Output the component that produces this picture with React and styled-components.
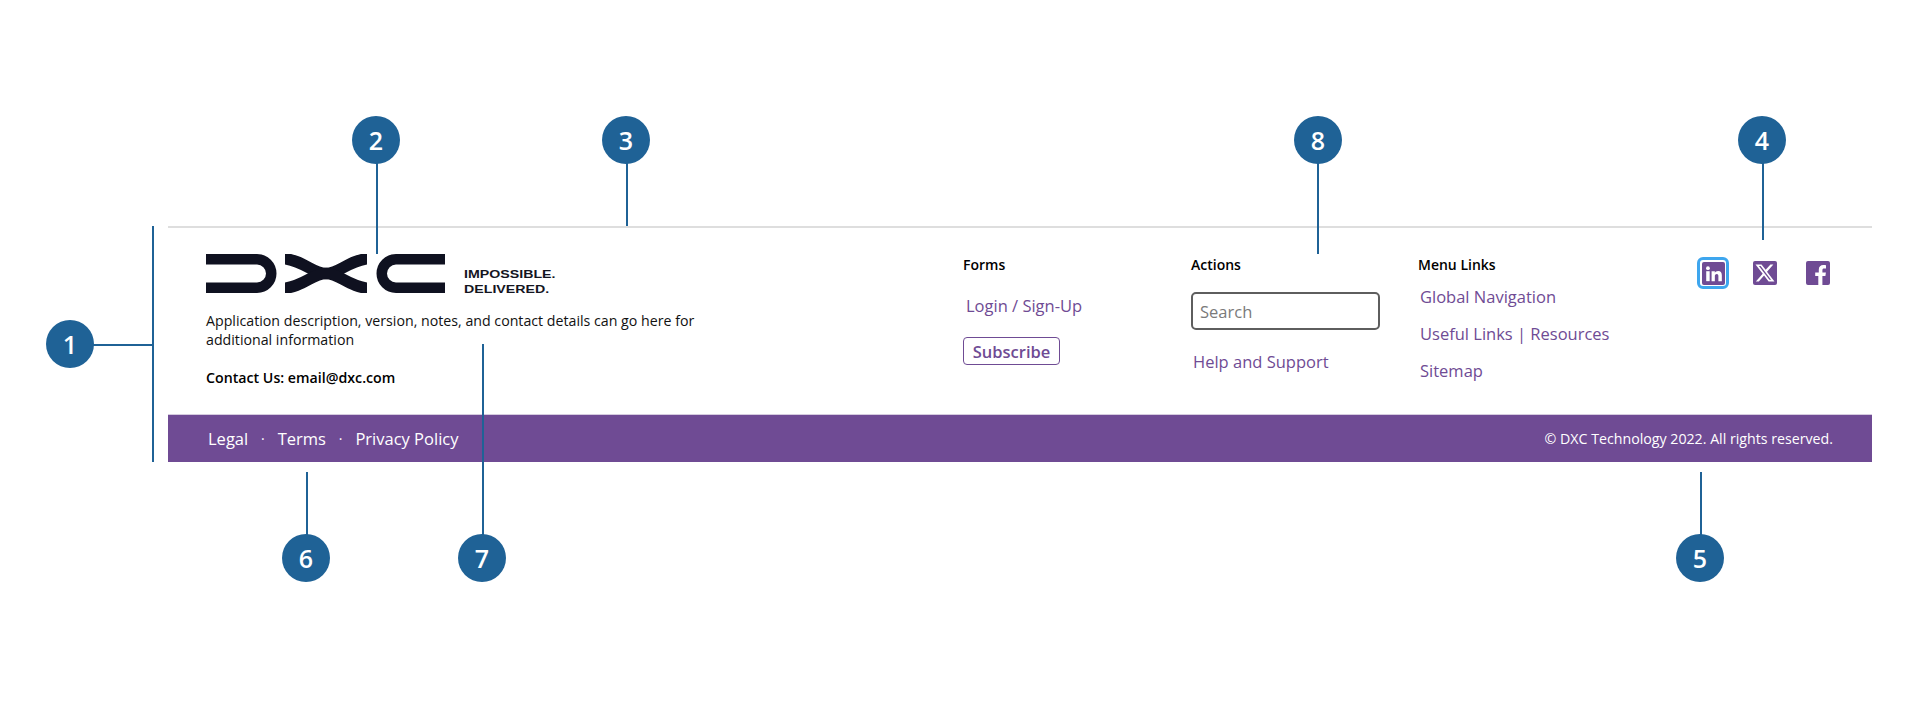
import React from 'react';
import styled, { createGlobalStyle } from 'styled-components';

const purple = '#6f4b94';
const blue = '#1f6296';

const GlobalStyle = createGlobalStyle`
    html, body {
        margin: 0;
        padding: 0;
        background: #ffffff;
        font-family: "Open Sans", "Liberation Sans", sans-serif;
    }
`;

const Page = styled.div`
    position: relative;
    box-sizing: border-box;
    width: 1920px;
    height: 720px;
    padding: 226px 48px 0 168px;
    overflow: hidden;
`;

const Footer = styled.footer`
    border-top: 2px solid #dedede;
`;

const Main = styled.div`
    display: grid;
    grid-template-columns: 757px 228px 227px 279px 1fr;
    box-sizing: border-box;
    height: 187px;
    padding-left: 38px;
`;

const Brand = styled.div`
    display: flex;
    flex-direction: column;
    padding-top: 26px;
`;

const LogoRow = styled.div`
    display: flex;
    align-items: flex-start;
`;

const Tagline = styled.div`
    margin: 13px 0 0 18px;
    font-family: "Liberation Sans", Arial, sans-serif;
    font-weight: 700;
    font-size: 11px;
    line-height: 15px;
    color: #14151f;
    transform: scaleX(1.29);
    transform-origin: left top;
`;

const Description = styled.p`
    width: 500px;
    margin: 14px 0 0;
    font-size: 14.2px;
    line-height: 19px;
    color: #111111;
`;

const Contact = styled.p`
    margin: 19px 0 0;
    font-size: 14.2px;
    line-height: 19px;
    font-weight: 600;
    color: #000000;
`;

const Column = styled.div`
    display: flex;
    flex-direction: column;
    align-items: flex-start;
    padding-top: 27px;
`;

const Heading = styled.h4`
    margin: 0;
    font-size: 14px;
    line-height: 19px;
    font-weight: 600;
    color: #000000;
`;

const NavLink = styled.a`
    margin-top: ${(props) => props.$top};
    padding-left: ${(props) => props.$left || '2px'};
    font-size: 16.5px;
    line-height: 24px;
    color: ${purple};
`;

const Subscribe = styled.button`
    box-sizing: border-box;
    width: 97px;
    height: 28px;
    margin-top: 19px;
    padding: 0;
    background: #ffffff;
    border: 1px solid ${purple};
    border-radius: 4px;
    font-family: inherit;
    font-size: 16.5px;
    font-weight: 600;
    color: ${purple};
`;

const Search = styled.input`
    box-sizing: border-box;
    width: 189px;
    height: 38px;
    margin-top: 18px;
    padding: 0 7px;
    background: #ffffff;
    border: 2px solid #5e5e5e;
    border-radius: 5px;
    font-family: inherit;
    font-size: 16.5px;

    &::placeholder {
        color: #7a7a7a;
        opacity: 1;
    }
`;

const Socials = styled.div`
    display: flex;
    align-items: center;
    height: 32px;
    margin-top: 29px;
`;

const SocialLink = styled.a`
    display: flex;
    align-items: center;
    justify-content: center;
    box-sizing: border-box;
    width: 32px;
    height: 32px;
    margin-right: ${(props) => props.$gap};
    border-radius: 6px;
    border: 3px solid ${(props) => (props.$focus ? '#3ea6ee' : 'transparent')};
`;

const Bar = styled.div`
    display: flex;
    align-items: center;
    justify-content: space-between;
    height: 47px;
    padding: 0 39px 0 40px;
    background: ${purple};
    box-shadow: 0 -1px 0 #d5cbdf;
    color: #ffffff;
`;

const Legal = styled.div`
    display: flex;
    align-items: center;
    font-size: 16.5px;
`;

const Dot = styled.span`
    width: 29.5px;
    text-align: center;
    font-size: 14px;
`;

const Copyright = styled.span`
    font-size: 14.2px;
`;

const Bubble = styled.div`
    position: absolute;
    left: ${(props) => props.$x - 24}px;
    top: ${(props) => props.$y - 24}px;
    display: flex;
    align-items: center;
    justify-content: center;
    width: 48px;
    height: 48px;
    border-radius: 50%;
    background: ${blue};
    color: #ffffff;
    font-size: 25px;
    font-weight: 550;
`;

const Leader = styled.div`
    position: absolute;
    left: ${(props) => props.$x}px;
    top: ${(props) => props.$y}px;
    width: ${(props) => props.$w}px;
    height: ${(props) => props.$h}px;
    background: ${blue};
`;

const bubbles = [
    { n: 1, x: 70, y: 344 },
    { n: 2, x: 376, y: 140 },
    { n: 3, x: 626, y: 140 },
    { n: 4, x: 1762, y: 140 },
    { n: 5, x: 1700, y: 558 },
    { n: 6, x: 306, y: 558 },
    { n: 7, x: 482, y: 558 },
    { n: 8, x: 1318, y: 140 },
];

const leaders = [
    { x: 152, y: 226, w: 2, h: 236 },
    { x: 90, y: 344, w: 62, h: 2 },
    { x: 376, y: 160, w: 2, h: 94 },
    { x: 626, y: 160, w: 2, h: 66 },
    { x: 1762, y: 160, w: 2, h: 80 },
    { x: 1317, y: 160, w: 2, h: 94 },
    { x: 1700, y: 472, w: 2, h: 66 },
    { x: 306, y: 472, w: 2, h: 66 },
    { x: 482, y: 344, w: 2, h: 194 },
];

const DxcLogo = () => (
    <svg width="240" height="39" viewBox="0 0 240 39" fill="none" stroke="#0f1120" strokeWidth="10.5">
        <path d="M0 5.25 H51 a14.25 14.25 0 0 1 0 28.5 H0" />
        <svg x="79" y="0" width="82" height="39" viewBox="79 0 82 39">
            <path strokeWidth="11.5" d="M74 4 C98 6 106 19.5 120 19.5 C134 19.5 142 6 166 4" />
            <path strokeWidth="11.5" d="M74 35 C98 33 106 19.5 120 19.5 C134 19.5 142 33 166 35" />
        </svg>
        <path d="M239 5.25 H190 a14.25 14.25 0 0 0 0 28.5 H239" />
    </svg>
);

const LinkedinIcon = () => (
    <svg width="23" height="23" viewBox="0 0 24 24">
        <rect width="24" height="24" rx="2" fill={purple} />
        <circle cx="6.2" cy="6.4" r="2" fill="#fff" />
        <rect x="4.4" y="9.6" width="3.6" height="10.4" fill="#fff" />
        <path fill="#fff" d="M10 9.6h3.4v1.5c.6-1 1.8-1.8 3.4-1.8 3 0 3.9 1.9 3.9 4.8V20h-3.6v-5.2c0-1.4-.3-2.4-1.7-2.4s-2 1-2 2.4V20H10z" />
    </svg>
);

const XIcon = () => (
    <svg width="24" height="24" viewBox="0 0 24 24">
        <rect width="24" height="24" rx="2" fill={purple} />
        <path fill="#fff" transform="translate(1.4 1.4) scale(0.88)" d="M18.244 2.25h3.308l-7.227 8.26 8.502 11.24H16.17l-5.214-6.817L4.99 21.75H1.68l7.73-8.835L1.254 2.25H8.08l4.713 6.231zm-1.161 17.52h1.833L7.084 4.126H5.117z" />
    </svg>
);

const FacebookIcon = () => (
    <svg width="24" height="24" viewBox="0 0 24 24">
        <path fill={purple} d="M2 0h20a2 2 0 0 1 2 2v20a2 2 0 0 1-2 2h-5.6v-9h3l.5-3.6h-3.5V9.2c0-1 .4-1.7 1.8-1.7h1.8V4.3c-.5-.1-1.5-.2-2.7-.2-2.7 0-4.5 1.6-4.5 4.6v2.7H9.2V15h3.1v9H2a2 2 0 0 1-2-2V2a2 2 0 0 1 2-2z" />
    </svg>
);

const App = () => {
    return (
        <Page>
            <GlobalStyle />
            <Footer>
                <Main>
                    <Brand>
                        <LogoRow>
                            <DxcLogo />
                            <Tagline>IMPOSSIBLE.<br />DELIVERED.</Tagline>
                        </LogoRow>
                        <Description>
                            Application description, version, notes, and contact details can go here for additional information
                        </Description>
                        <Contact>Contact Us: email@dxc.com</Contact>
                    </Brand>
                    <Column>
                        <Heading>Forms</Heading>
                        <NavLink $top="20px" $left="3px">Login / Sign-Up</NavLink>
                        <Subscribe>Subscribe</Subscribe>
                    </Column>
                    <Column>
                        <Heading>Actions</Heading>
                        <Search placeholder="Search" readOnly />
                        <NavLink $top="20px">Help and Support</NavLink>
                    </Column>
                    <Column>
                        <Heading>Menu Links</Heading>
                        <NavLink $top="11px">Global Navigation</NavLink>
                        <NavLink $top="12.5px">Useful Links | Resources</NavLink>
                        <NavLink $top="13.5px">Sitemap</NavLink>
                    </Column>
                    <Socials>
                        <SocialLink $focus $gap="20px"><LinkedinIcon /></SocialLink>
                        <SocialLink $gap="21px"><XIcon /></SocialLink>
                        <SocialLink><FacebookIcon /></SocialLink>
                    </Socials>
                </Main>
                <Bar>
                    <Legal>
                        <span>Legal</span>
                        <Dot>·</Dot>
                        <span>Terms</span>
                        <Dot>·</Dot>
                        <span>Privacy Policy</span>
                    </Legal>
                    <Copyright>© DXC Technology 2022. All rights reserved.</Copyright>
                </Bar>
            </Footer>
            {leaders.map((l) => (
                <Leader key={`${l.x}-${l.y}`} $x={l.x} $y={l.y} $w={l.w} $h={l.h} />
            ))}
            {bubbles.map((b) => (
                <Bubble key={b.n} $x={b.x} $y={b.y}>{b.n}</Bubble>
            ))}
        </Page>
    );
};

export default App;
